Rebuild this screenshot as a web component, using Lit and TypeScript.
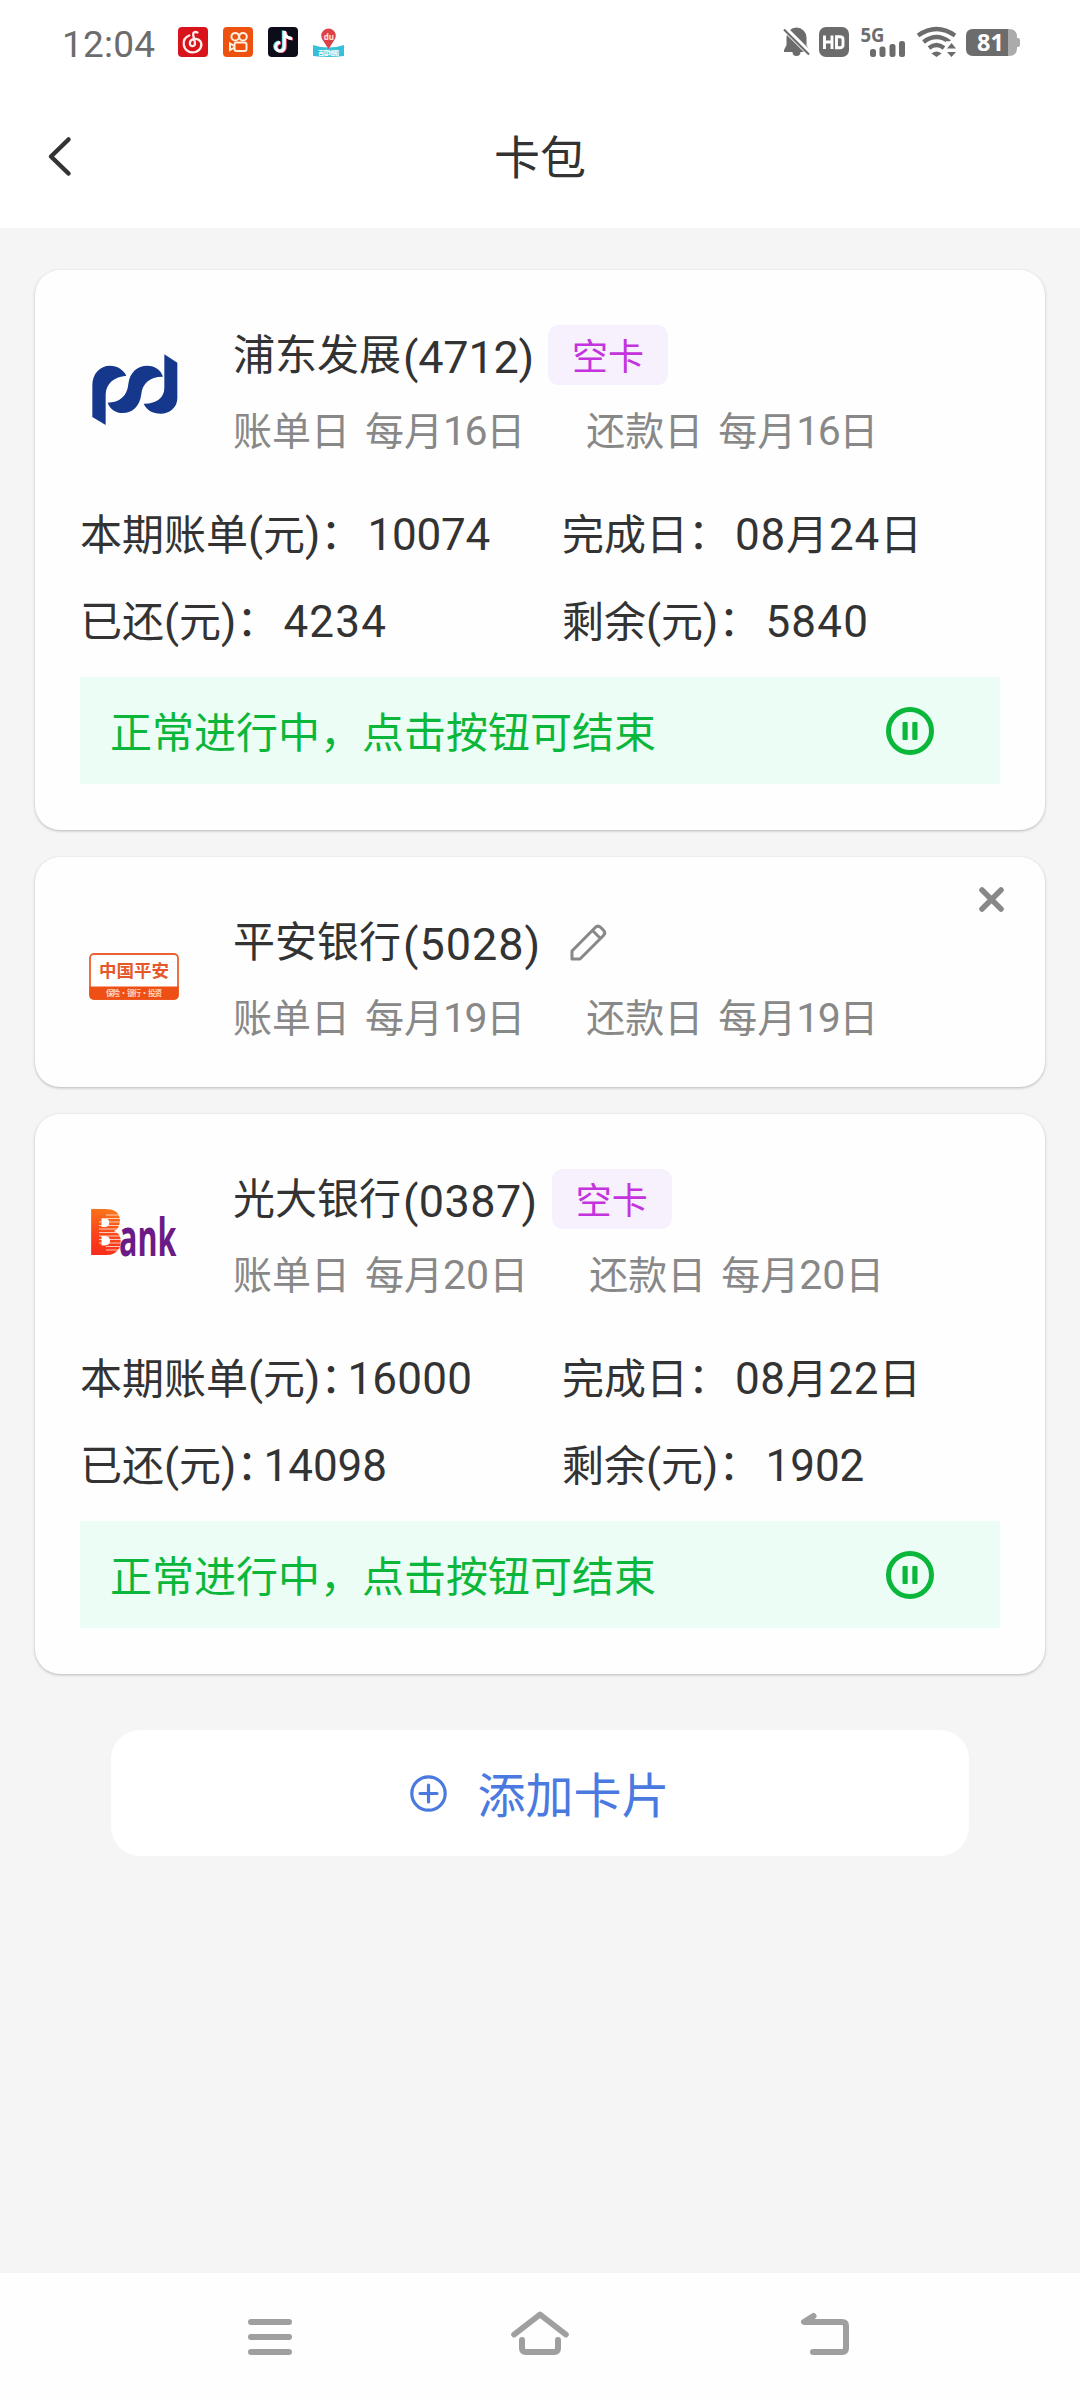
import { LitElement, html, css, svg, nothing, TemplateResult } from "lit";
import { customElement, property } from "lit/decorators.js";
import { classMap } from "lit/directives/class-map.js";
import { styleMap } from "lit/directives/style-map.js";

type Bank = "spd" | "pingan" | "everbright";

interface Amount {
  text: string;
  track: number;
}

interface Bill {
  total: Amount;
  paid: Amount;
  finish: Amount;
  rest: Amount;
  tight: boolean;
}

interface Card {
  bank: Bank;
  name: string;
  tail: string;
  tailTrack: number;
  day: string;
  dayTrack: number;
  empty: boolean;
  bill?: Bill;
}

const CARDS: Card[] = [
  {
    bank: "spd", name: "浦东发展", tail: "(4712)", tailTrack: -0.2, day: "16", dayTrack: -1.5, empty: true,
    bill: {
      total: { text: "10074", track: -0.2 }, paid: { text: "4234", track: 1.2 },
      finish: { text: "08月24日", track: 0.8 }, rest: { text: "5840", track: 1.2 }, tight: false,
    },
  },
  { bank: "pingan", name: "平安银行", tail: "(5028)", tailTrack: 1, day: "19", dayTrack: -1.5, empty: false },
  {
    bank: "everbright", name: "光大银行", tail: "(0387)", tailTrack: 0.4, day: "20", dayTrack: 0, empty: true,
    bill: {
      total: { text: "16000", track: 0.2 }, paid: { text: "14098", track: 0 },
      finish: { text: "08月22日", track: 0.6 }, rest: { text: "1902", track: 0 }, tight: true,
    },
  },
];

/* Wraps runs of digits and parentheses so they can be set slightly larger than the Han text. */
const mixed = (text: string) =>
  text.split(/([0-9()]+)/).filter(Boolean).map((part) =>
    /^[0-9()]/.test(part) ? html`<span class="n">${part}</span>` : html`${part}`);

const logos: Record<Bank, TemplateResult> = {
  spd: html`<svg class="spd" viewBox="186 280 258 214" width="86" height="71.4">
    <g fill="#15388c">
      <path d="M187 469V374C187 339 210 315 240 315C262 315 280 327 289 345C254 348 227 368 227 402V493Z"/>
      <path d="M233 426C268 426 292 406 295 370C299 335 322 315 352 315C375 315 392 327 399 348C361 347 337 368 334 400C330 436 308 457 278 457C258 457 240 446 233 426Z"/>
      <path d="M403 281L442 306V412C442 440 420 459 392 459C368 459 350 449 341 429C378 430 403 412 403 382Z"/>
    </g></svg>`,
  pingan: html`<svg class="pingan" viewBox="0 0 90 47" width="90" height="47">
    <rect x="1" y="1" width="88" height="45" rx="4" fill="#fff" stroke="#e9622f" stroke-width="1.8"/>
    <path d="M0.5 33.5H89.5V42Q89.5 46.5 85 46.5H5Q0.500 46.500 .5 42Z" fill="#ee4f14"/>
    <text x="10" y="23.500" textLength="70" font-size="17.500" font-weight="700" fill="#e4582a">中国平安</text>
    <text x="17" y="43" textLength="56" font-size="7.500" font-weight="700" fill="#ffd9c4" xml:space="preserve">保险 · 银行 · 投资</text>
  </svg>`,
  everbright: html`<svg class="everbright" viewBox="0 0 88 48" width="88" height="48">
    <defs><linearGradient id="flame" x1="0.3" y1="0" x2="0.2" y2="1">
      <stop offset="0" stop-color="#f79a1c"/><stop offset="0.5" stop-color="#fb4a1a"/><stop offset="1" stop-color="#f5121c"/>
    </linearGradient></defs>
    <text class="latin" transform="translate(-4 46) scale(.84 1)" font-size="64" font-weight="800" fill="url(#flame)">B</text>
    <g stroke="#fff" stroke-width="1" opacity=".7">
      ${[6, 9.5, 13, 16.5, 20, 23.5, 27, 30.5, 34, 37.5, 41].map((y) => svg`<path d="M${y > 12 && y < 37 ? 8 : 15} ${y}H30"/>`)}
    </g>
    <text class="latin" transform="translate(28 46.500) scale(.66 1)" font-size="52" font-weight="700" fill="#6b1a86" textLength="87" lengthAdjust="spacingAndGlyphs">ank</text>
  </svg>`,
};

const shared = css`
  * { box-sizing: border-box; }
  svg { display: block; flex: none; overflow: visible; }
`;

@customElement("status-bar")
class StatusBar extends LitElement {
  static styles = [shared, css`
    :host { display: flex; height: 84px; padding: 27px 60px 27px 62px; justify-content: space-between; color: #6c6c6c; font-family: Roboto, sans-serif; }
    .left, .right { display: flex; height: 30px; align-items: center; }
    .time { font-size: 37px; line-height: 30px; width: 116px; padding-top: 5px; letter-spacing: .2px; }
    .apps { display: flex; gap: 15px; }
    .right { gap: 9px; }
    text { font-family: "Noto Sans", "Noto Sans CJK SC", sans-serif; font-weight: 700; }
  `];
  render() {
    return html`
      <div class="left">
        <div class="time">12:04</div>
        <div class="apps">
          <svg width="30" height="30" viewBox="0 0 30 30">
            <rect width="30" height="30" rx="4" fill="#d8131b"/>
            <path d="M19.500 5.500C17 4.300 14.700 5.500 15.200 8L16.900 15.200C17.600 18.300 15.400 19.700 13.500 19C11.300 18.200 11.300 14.500 13.500 13C16 11.200 20.500 11.500 22.500 14.500C24.500 17.800 23 23.500 17.500 25C11.500 26.500 6.500 23 5.800 17.800C5.200 13.500 7.500 10 11.300 8.500" fill="none" stroke="#fff0ee" stroke-width="2.300" stroke-linecap="round"/>
          </svg>
          <svg width="30" height="30" viewBox="0 0 30 30">
            <rect width="30" height="30" rx="4" fill="#ee5210"/>
            <g fill="none" stroke="#fff1df" stroke-width="2"><circle cx="12.200" cy="9.700" r="3.800"/><circle cx="20" cy="9.700" r="3.800"/><rect x="11.500" y="15.500" width="12" height="8.500" rx="2"/><path d="M11.500 19L7 16.500V23L11.500 20.500"/></g>
          </svg>
          <svg width="30" height="30" viewBox="0 0 30 30">
            <rect width="30" height="30" rx="4" fill="#0d0d1a"/>
            <g fill="none" stroke-width="3" transform="translate(0 -.5)">
              <path d="M15.300 4V19.500A4.300 4.300 0 1 1 11 15.500M15.500 5C16 9 19 11.500 23 11.500" stroke="#5fe3e6"/>
              <path d="M17.300 5V20.500A4.300 4.300 0 1 1 13 16.500M17.500 6C18 10 21 12.500 25 12.500" stroke="#ec5b82"/>
              <path d="M16.300 4.500V20A4.300 4.300 0 1 1 12 16M16.500 5.500C17 9.500 20 12 24 12" stroke="#fff"/>
            </g>
          </svg>
          <svg width="31" height="30" viewBox="0 0 31 30">
            <path d="M0 18Q15.500 23 31 18V29Q15.500 31 0 29Z" fill="#35bfd8"/>
            <path d="M15.500 22L10 13.500A7.300 7.300 0 1 1 21 13.500Z" fill="#dd4249"/>
            <text x="10.700" y="12.500" font-size="8" fill="#ffe4e0">du</text>
            <text x="5" y="28" font-size="6" fill="#fff" textLength="21">百度地图</text>
          </svg>
        </div>
      </div>
      <div class="right">
        <svg width="27" height="30" viewBox="0 0 27 30" fill="#6c6c6c">
          <path d="M13.500 0.500A10 10 0 0 1 23.500 10.500V18L26 23V25H17.500A4 4 0 0 1 9.500 25H1V23L3.500 18V10.500A10 10 0 0 1 13.500 .5Z"/>
          <path d="M-1 -1L28 28" stroke="#fff" stroke-width="6"/><path d="M1 2.500L26 27.500" stroke="#6c6c6c" stroke-width="2.200"/>
        </svg>
        <svg width="30" height="30" viewBox="0 0 30 30">
          <rect width="30" height="30" rx="7" fill="#6c6c6c"/>
          <path d="M5.500 8.500V22M13 8.500V22M5.500 15H13M17.500 9.800H21Q24 9.800 24 12.500V18Q24 20.700 21 20.700H17.500Z" fill="none" stroke="#fff" stroke-width="2.900"/>
        </svg>
        <svg width="50" height="30" viewBox="0 0 50 30" fill="#6c6c6c">
          <text x="2.500" y="14.500" font-size="20" textLength="24" lengthAdjust="spacingAndGlyphs">5G</text>
          <rect x="12" y="22" width="6" height="8" rx="2.500"/><rect x="21.500" y="19.500" width="6" height="10.500" rx="2.500"/><rect x="31.500" y="17" width="6" height="13" rx="2.500"/><rect x="41" y="14" width="6" height="16" rx="2.500"/>
        </svg>
        <svg width="40" height="30" viewBox="0 0 40 30">
          <g fill="none" stroke="#6c6c6c" stroke-width="4.300"><path d="M1 8.500Q19.500 -4.500 38 8.500"/><path d="M6.500 15Q19.500 5 32.500 15"/><path d="M12 21Q19.500 15 27 21"/></g>
          <path d="M14.500 26.500Q19.500 22.500 24.500 26.500L19.500 30Z" fill="#6c6c6c"/>
          <path d="M29 14L43 15V30H29Z" fill="#fff" opacity=".9"/>
          <path d="M30 21.500L34.500 16L39 21.500ZM30 25L34.500 30L39 25Z" fill="#6c6c6c"/>
        </svg>
        <svg width="54" height="27" viewBox="0 0 54 27">
          <path d="M41 0H43Q51 0 51 8V9H52Q54 9 54 11V16Q54 18 52 18H51V19Q51 27 43 27H41Z" fill="#ababab"/>
          <path d="M7 0H42V27H7Q0 27 0 20V7Q0 0 7 0Z" fill="#6c6c6c"/>
          <text x="11" y="22" font-size="23.500" fill="#fff" textLength="27">81</text>
        </svg>
      </div>`;
  }
}

@customElement("bank-card")
class BankCard extends LitElement {
  @property({ attribute: false }) card!: Card;

  static styles = [shared, css`
    :host { display: block; position: relative; height: 230px; padding: 0 45px; background: #fefefe; border-radius: 25px; box-shadow: 0 1px 3px rgba(0, 0, 0, .25); color: #333; font: 42px/60px Roboto, "Noto Sans CJK SC", sans-serif; }
    :host(.tall) { height: 560px; }
    .head { display: flex; padding-top: 55px; height: 236px; }
    .logo { width: 153px; padding-left: 10px; }
    .logo text { font-family: "Noto Sans CJK SC", sans-serif; }
    .logo .latin { font-family: "Open Sans", "Liberation Sans", sans-serif; }
    .spd { margin: 29px 0 0 2px; }
    .pingan { margin: 41px 0 0 -1px; }
    .everbright { margin: 40px 0 0 1px; }
    .title { display: flex; height: 60px; }
    .title span, .line, .dates { white-space: nowrap; }
    .name { line-height: 62px; }
    .n { font-size: 44px; line-height: 0; }
    .tail { margin-left: 2px; font-size: 45px; line-height: 66px; }
    .badge { width: 120px; height: 60px; margin-left: 14px; border-radius: 11px; background: #f7f1fe; color: #c334dc; font-size: 36px; line-height: 67px; text-align: center; }
    .edit { margin: 12px 0 0 29px; }
    .dates { display: flex; gap: 61px; margin-top: 22px; color: #888; font-size: 39px; line-height: 50px; }
    .date { display: flex; gap: 15px; }
    .dates .n { font-size: 41px; }
    .bill { display: grid; grid-template-columns: 482px 1fr; grid-auto-rows: 87px; height: 171px; }
    .line { display: flex; height: 60px; }
    .colon { width: 47px; line-height: 58px; }
    .tight .colon { width: 27px; font-feature-settings: "halt"; }
    .status { display: flex; justify-content: space-between; height: 107px; padding: 0 66px 0 30px; background: #ebfdf4; color: #0bb73b; line-height: 113px; }
    .pause { margin-top: 30px; }
    .close { position: absolute; top: 30px; right: 41px; }
  `];

  private field(label: string, value: Amount, tight = false) {
    return html`<div class=${classMap({ line: true, tight })}><span>${mixed(label)}</span><span class="colon">：</span><span style=${styleMap({ letterSpacing: `${value.track}px` })}>${mixed(value.text)}</span></div>`;
  }

  private date(label: string) {
    const { day, dayTrack } = this.card;
    return html`<div class="date"><span>${label}</span><span>每月<span class="n" style=${styleMap({ letterSpacing: `${dayTrack}px` })}>${day}</span>日</span></div>`;
  }

  render() {
    const { bank, name, tail, tailTrack, empty, bill } = this.card;
    return html`
      <div class="head">
        <div class="logo">${logos[bank]}</div>
        <div class="info">
          <div class="title">
            <span class="name">${name}</span><span class="tail" style=${styleMap({ letterSpacing: `${tailTrack}px` })}>${tail}</span>
            ${empty ? html`<span class="badge">空卡</span>` : html`
              <svg class="edit" width="37" height="37" viewBox="0 0 37 37" fill="none" stroke="#888" stroke-width="3" stroke-linejoin="round">
                <path d="M2 35V27L25.500 3.200Q28 1 30.500 3.200L33.500 6.300Q36 9 33.500 11.500L10 35Z"/><path d="M22.500 6.500L30.500 14.500"/>
              </svg>`}
          </div>
          <div class="dates">${this.date("账单日")}${this.date("还款日")}</div>
        </div>
      </div>
      ${bill ? html`
        <div class="bill">
          ${this.field("本期账单(元)", bill.total, bill.tight)}${this.field("完成日", bill.finish)}
          ${this.field("已还(元)", bill.paid, bill.tight)}${this.field("剩余(元)", bill.rest)}
        </div>
        <div class="status">
          <span>正常进行中，点击按钮可结束</span>
          <svg class="pause" width="48" height="48" viewBox="0 0 48 48">
            <circle cx="24" cy="24" r="21.500" fill="none" stroke="#0bb73b" stroke-width="5"/>
            <rect x="16.500" y="15" width="5.200" height="18" rx="1" fill="#0bb73b"/><rect x="26.300" y="15" width="5.200" height="18" rx="1" fill="#0bb73b"/>
          </svg>
        </div>` : nothing}
      ${empty ? nothing : html`<svg class="close" width="25" height="25" viewBox="0 0 25 25"><path d="M3 3L22 22M22 3L3 22" stroke="#888" stroke-width="5.500" stroke-linecap="round"/></svg>`}
    `;
  }
}

@customElement("app-root")
class AppRoot extends LitElement {
  static styles = [shared, css`
    :host { display: flex; flex-direction: column; width: 1080px; height: 2400px; background: #fff; font-family: Roboto, "Noto Sans CJK SC", sans-serif; }
    .header { display: grid; grid-template-columns: 100px 1fr 100px; height: 144px; }
    .back { margin: 53px 0 0 48px; }
    .title { font-size: 46px; line-height: 149px; text-align: center; color: #333; }
    .page { flex: 1; display: flex; flex-direction: column; gap: 27px; padding: 42px 35px 0; background: #f5f5f5; }
    .add { display: flex; justify-content: center; gap: 30px; height: 126px; margin: 29px 76px 0; border-radius: 29px; background: #fff; color: #4a79df; font-size: 48px; line-height: 133px; }
    .plus { margin-top: 45px; }
    .nav { height: 127px; padding: 36px 0 0 248px; display: flex; background: #fefefe; }
    .nav svg { fill: none; stroke: #9f9f9f; stroke-width: 6; stroke-linecap: round; stroke-linejoin: round; }
    .menu { margin-right: 219px; }
    .home { margin-right: 232px; }
  `];
  render() {
    return html`
      <status-bar></status-bar>
      <div class="header">
        <svg class="back" width="23" height="39" viewBox="0 0 23 39"><path d="M20.500 2.500L3 19.500L20.500 36.500" fill="none" stroke="#333" stroke-width="4.500" stroke-linecap="round" stroke-linejoin="round"/></svg>
        <div class="title">卡包</div>
      </div>
      <div class="page">
        ${CARDS.map((card) => html`<bank-card class=${classMap({ tall: !!card.bill })} .card=${card}></bank-card>`)}
        <div class="add">
          <svg class="plus" width="37" height="37" viewBox="0 0 37 37"><circle cx="18.500" cy="18.500" r="16.700" fill="none" stroke="#4a79df" stroke-width="3.200"/><path d="M18.500 10V27M10 18.500H27" stroke="#4a79df" stroke-width="3.200" stroke-linecap="round"/></svg>
          <span>添加卡片</span>
        </div>
      </div>
      <div class="nav">
        <svg class="menu" width="44" height="48" viewBox="0 0 44 48"><path d="M3 13H41M3 28H41M3 43H41"/></svg>
        <svg class="home" width="58" height="48" viewBox="0 0 58 48"><path d="M3.200 25.500L29 5.500L54.800 25.500M11 31V39Q11 43 15 43H43Q47 43 47 39V31"/></svg>
        <svg width="48" height="48" viewBox="0 0 48 48"><path d="M12.500 7L3 13H41Q45 13 45 17V39Q45 43 41 43H12"/></svg>
      </div>`;
  }
}
